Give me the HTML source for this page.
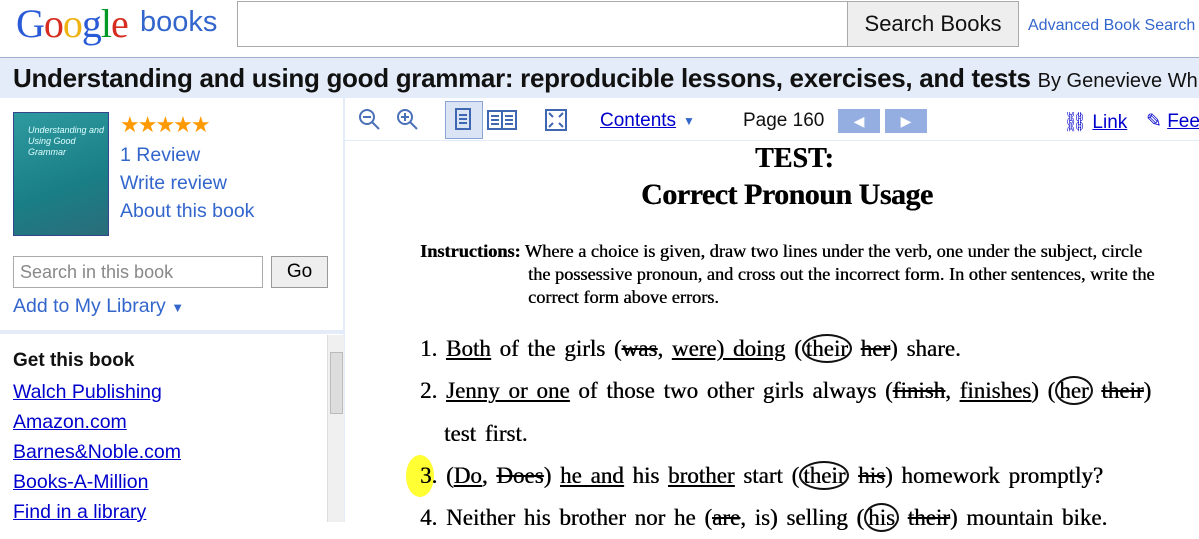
<!DOCTYPE html><html><head><style>
body{margin:0;width:1199px;height:522px;overflow:hidden;font-family:"Liberation Sans",Arial,sans-serif;background:#fff;position:relative}
.a{position:absolute;white-space:nowrap}
.l{color:#3366cc;font-size:19.5px}
.u{color:#0000cc;text-decoration:underline;font-size:19.5px}
.s{font-family:"Liberation Serif",serif;color:#000;text-shadow:0.4px 0 0 #000}
.ul{text-decoration:underline}
.st{text-decoration:line-through}
.c{border:2px solid #111;border-radius:50%;padding:0 2px}
</style></head><body>
<div class="a" style="left:16px;top:0;font-family:'Liberation Serif',serif;font-size:40px;letter-spacing:-1px"><span style="color:#2a5bd7">G</span><span style="color:#d62d20">o</span><span style="color:#eeb211">o</span><span style="color:#2a5bd7">g</span><span style="color:#009925">l</span><span style="color:#d62d20">e</span></div>
<div class="a" style="left:140px;top:6px;font-size:29px;color:#3366cc">books</div>
<div class="a" style="left:237px;top:1px;width:610px;height:44px;border:1px solid #aaa;border-right:none"></div>
<div class="a" style="left:847px;top:1px;width:170px;height:44px;border:1px solid #aaa;background:#eee;font-size:22px;text-align:center;line-height:44px;color:#111">Search Books</div>
<div class="a" style="left:1028px;top:17px;font-size:16px;color:#3366cc">Advanced Book Search</div>
<div class="a" style="left:0;top:57px;width:1199px;height:40px;background:#e5ecf9;border-top:1px solid #9fb0d0"></div>
<div class="a" style="left:13px;top:63px;font-size:26px;font-weight:bold;color:#111;letter-spacing:-0.3px">Understanding and using good grammar: reproducible lessons, exercises, and tests <span style="font-weight:normal;font-size:20px;letter-spacing:0">By Genevieve Wh</span></div>
<div class="a" style="left:343px;top:97px;width:2px;height:425px;background:#e5ecf9"></div>
<div class="a" style="left:0;top:330px;width:343px;height:4px;background:#e5ecf9"></div>
<div class="a" style="left:13px;top:112px;width:94px;height:122px;background:linear-gradient(160deg,#2e9aa0,#1a7e86 60%,#2a6d7a);border:1px solid #33468c"><div style="font-size:9px;color:#dff;font-style:italic;padding:12px 0 0 14px;white-space:normal;line-height:11px">Understanding and Using Good Grammar</div></div>
<div class="a" style="left:120px;top:112px;font-size:22px;color:#f90;letter-spacing:-2px">★★★★★</div>
<div class="a l" style="left:120px;top:144px">1 Review</div>
<div class="a l" style="left:120px;top:172px">Write review</div>
<div class="a l" style="left:120px;top:200px">About this book</div>
<div class="a" style="left:13px;top:256px;width:248px;height:30px;border:1px solid #aaa;font-size:18px;color:#888;line-height:30px;text-indent:6px">Search in this book</div>
<div class="a" style="left:271px;top:256px;width:55px;height:30px;border:1px solid #999;background:#eee;font-size:19px;text-align:center;line-height:30px">Go</div>
<div class="a l" style="left:13px;top:295px">Add to My Library <span style="font-size:13px">▼</span></div>
<div class="a" style="left:13px;top:350px;font-size:19px;font-weight:bold;color:#111">Get this book</div>
<div class="a u" style="left:13px;top:381px">Walch Publishing</div>
<div class="a u" style="left:13px;top:411px">Amazon.com</div>
<div class="a u" style="left:13px;top:441px">Barnes&amp;Noble.com</div>
<div class="a u" style="left:13px;top:471px">Books-A-Million</div>
<div class="a u" style="left:13px;top:501px">Find in a library</div>
<div class="a" style="left:327px;top:335px;width:16px;height:187px;background:#f0f0f0;border-left:1px solid #ddd"></div>
<div class="a" style="left:330px;top:352px;width:11px;height:60px;background:#ddd;border:1px solid #bbb"></div>
<div class="a" style="left:345px;top:140px;width:854px;height:1px;background:#e5ecf9"></div>
<svg class="a" style="left:358px;top:108px" width="80" height="26"><g stroke="#4a70b8" stroke-width="2" fill="none"><circle cx="9" cy="9" r="7"/><path d="M14 14l7 7M5 9h8"/><circle cx="47" cy="9" r="7"/><path d="M52 14l7 7M43 9h8M47 5v8"/></g></svg>
<div class="a" style="left:445px;top:101px;width:36px;height:36px;background:#dbe4f5;border:1px solid #8aa4d6"></div>
<svg class="a" style="left:454px;top:108px" width="120" height="26"><g stroke="#3e66b3" stroke-width="2" fill="none"><rect x="2" y="1" width="14" height="20"/><path d="M5 7h8M5 11h8M5 15h8"/><rect x="34" y="3" width="28" height="18"/><path d="M48 3v18M37 8h8M37 12h8M37 16h8M51 8h8M51 12h8M51 16h8"/><rect x="92" y="2" width="20" height="20"/><path d="M95 5l4 4M109 5l-4 4M95 19l4-4M109 19l-4-4"/></g></svg>
<div class="a" style="left:600px;top:110px;font-size:19px;color:#0000cc;text-decoration:underline">Contents</div>
<div class="a" style="left:683px;top:114px;font-size:12px;color:#3366cc">▼</div>
<div class="a" style="left:743px;top:110px;font-size:19px;color:#111">Page 160</div>
<div class="a" style="left:838px;top:109px;width:42px;height:24px;background:#95aee2;color:#fff;text-align:center;line-height:24px;font-size:14px">◀</div>
<div class="a" style="left:885px;top:109px;width:42px;height:24px;background:#95aee2;color:#fff;text-align:center;line-height:24px;font-size:14px">▶</div>
<div class="a" style="left:1063px;top:110px;font-size:19px;color:#0000cc">⛓&#xFE0E; <span style="text-decoration:underline">Link</span></div>
<div class="a" style="left:1146px;top:110px;font-size:19px;color:#0000cc">✎ <span style="text-decoration:underline">Feedback</span></div>
<div class="a s" style="left:755px;top:143px;font-size:28px;font-weight:bold">TEST:</div>
<div class="a s" style="left:641px;top:178px;font-size:30px;font-weight:bold;letter-spacing:-0.5px">Correct Pronoun Usage</div>
<div class="a s" style="left:420px;top:240px;font-size:18.3px;line-height:23px;letter-spacing:0"><b>Instructions:</b> Where a choice is given, draw two lines under the verb, one under the subject, circle<br><span style="padding-left:108px">the possessive pronoun, and cross out the incorrect form. In other sentences, write the</span><br><span style="padding-left:108px">correct form above errors.</span></div>
<div class="a" style="left:406px;top:455px;width:28px;height:42px;border-radius:50%;background:#ffff33"></div>
<div class="a s" style="left:420px;top:328px;font-size:23px;line-height:42.3px;word-spacing:3px">1. <span class="ul">Both</span> of the girls (<span class="st">was</span>, <span class="ul">were) doing</span> (<span class="c">their</span> <span class="st">her</span>) share.<br>2. <span class="ul">Jenny or one</span> of those two other girls always (<span class="st">finish</span>, <span class="ul">finishes</span>) (<span class="c">her</span> <span class="st">their</span>)<br><span style="padding-left:24px">test first.</span><br>3. (<span class="ul">Do</span>, <span class="st">Does</span>) <span class="ul">he and</span> his <span class="ul">brother</span> start (<span class="c">their</span> <span class="st">his</span>) homework promptly?<br>4. Neither his brother nor he (<span class="st">are</span>, is) selling (<span class="c">his</span> <span class="st">their</span>) mountain bike.</div>
</body></html>
